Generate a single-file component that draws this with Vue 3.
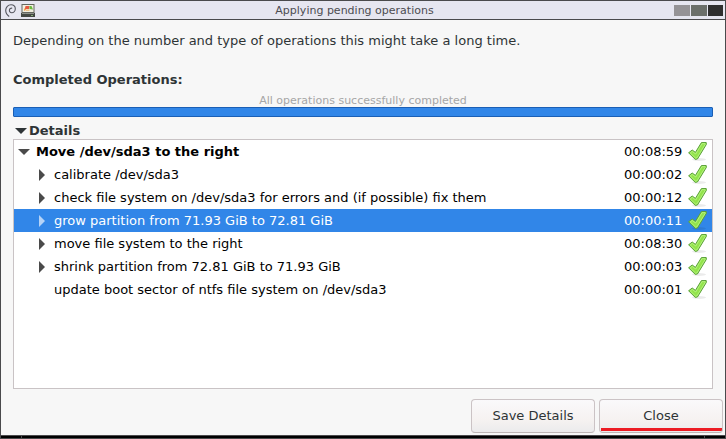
<script setup>
import { ref, computed } from 'vue'

const detailsOpen = ref(true)
const rootOpen = ref(true)
const selected = ref(3)

const operations = [
  { id: 0, label: 'Move /dev/sda3 to the right', time: '00:08:59', root: true, expandable: true },
  { id: 1, label: 'calibrate /dev/sda3', time: '00:00:02', expandable: true },
  { id: 2, label: 'check file system on /dev/sda3 for errors and (if possible) fix them', time: '00:00:12', expandable: true },
  { id: 3, label: 'grow partition from 71.93 GiB to 72.81 GiB', time: '00:00:11', expandable: true },
  { id: 4, label: 'move file system to the right', time: '00:08:30', expandable: true },
  { id: 5, label: 'shrink partition from 72.81 GiB to 71.93 GiB', time: '00:00:03', expandable: true },
  { id: 6, label: 'update boot sector of ntfs file system on /dev/sda3', time: '00:00:01', expandable: false }
]

const visible = computed(() => operations.filter((op) => op.root || rootOpen.value))

function toggle(op) {
  if (op.root) rootOpen.value = !rootOpen.value
}
</script>

<template>
  <div class="window">
    <header class="titlebar">
      <div class="title-icons">
        <svg class="swirl" viewBox="0 0 11 13" aria-hidden="true">
          <path d="M4.200 12.500C2 11 .7 9 .7 6.300C.7 3 3.200 .7 6 .7C8.600 .7 10.300 2.500 10.300 4.800C10.300 7.200 8.600 8.800 6.800 8.800C5.100 8.800 4.200 7.500 4.400 6.100C4.600 4.800 5.800 3.900 7.200 4.200" />
        </svg>
        <svg class="disk" viewBox="0 0 14 13" aria-hidden="true">
          <path d="M.5 0H13.500V9H.5Z" fill="#65675f" />
          <path d="M1.500 1H12.500V8H1.500Z" fill="#f1efe0" />
          <path d="M3 5L5 3V6L3 7Z" fill="#f6a355" />
          <path d="M4.500 2H8.500L8 5H4Z" fill="#e6583f" />
          <path d="M8.500 2H10.500L12 5.500L8.500 5Z" fill="#69bb3f" />
          <path d="M5 5.500H8.500V7H5Z" fill="#f1c78a" />
          <path d="M0 9H14V13H0Z" fill="#444843" />
          <path d="M1 9H13V10H1Z" fill="#8e928b" />
          <path d="M10 11H12V12H10Z" fill="#86ad77" />
        </svg>
      </div>
      <h1 class="title">Applying pending operations</h1>
      <div class="window-controls">
        <button class="control minimize" type="button" aria-label="Minimize"></button>
        <button class="control maximize" type="button" aria-label="Maximize"></button>
        <button class="control shut" type="button" aria-label="Close window"></button>
      </div>
    </header>

    <main class="content">
      <p class="intro">Depending on the number and type of operations this might take a long time.</p>
      <h2 class="heading">Completed Operations:</h2>
      <label class="status" for="overall">All operations successfully completed</label>
      <progress id="overall" class="progress" value="100" max="100"></progress>
      <button class="details-toggle" type="button" :aria-expanded="detailsOpen" @click="detailsOpen = !detailsOpen">
        <svg class="arrow" :class="{ open: detailsOpen }" viewBox="0 0 12 12" aria-hidden="true"><path d="M3 0L9 6L3 12Z" /></svg>
        <span>Details</span>
      </button>
      <div v-if="detailsOpen" class="list">
        <table class="operations" aria-label="Operation details">
          <tbody>
            <tr
              v-for="op in visible"
              :key="op.id"
              :class="{ root: op.root, selected: selected === op.id }"
              @click="selected = op.id"
            >
              <td class="name">
                <div class="name-inner">
                  <button v-if="op.expandable" class="expander" type="button" :aria-label="'Expand ' + op.label" @click.stop="toggle(op)">
                    <svg class="arrow" :class="{ open: op.root && rootOpen }" viewBox="0 0 12 12" aria-hidden="true"><path d="M3 0L9 6L3 12Z" /></svg>
                  </button>
                  <span v-else class="expander"></span>
                  <span>{{ op.label }}</span>
                </div>
              </td>
              <td class="time">{{ op.time }}</td>
              <td class="state">
                <svg class="check" viewBox="0 0 20 20" role="img" aria-label="Success">
                  <ellipse cx="11" cy="17.500" rx="7" ry="1.500" fill="#000" opacity=".08" />
                  <path d="M.6 10.800L4.200 8L7.400 10.400L13.400 .6L18.200 .5L18.400 2.300L9.500 16.900L7.300 17.400Z" fill="#92e44a" stroke="#5a9f3a" stroke-linejoin="round" />
                  <path d="M2.300 11L4.200 9.400L7.700 12L14 1.700L17.100 1.600L17.100 2.500L8.900 15.900L7.600 16.100Z" fill="none" stroke="#c3f595" stroke-width=".7" />
                </svg>
              </td>
            </tr>
          </tbody>
        </table>
      </div>
    </main>

    <footer class="actions">
      <button class="action" type="button">Save Details</button>
      <button class="action marked" type="button">Close</button>
    </footer>
    <div class="frame-grip"><span></span></div>
  </div>
</template>

<style>
body {
  margin: 0;
}
</style>

<style scoped>
.window {
  box-sizing: border-box;
  display: flex;
  flex-direction: column;
  min-height: 100vh;
  border: 1px solid #4a4a4c;
  background: #f7f7f7;
  color: #2e3436;
  font: 13px/15px "DejaVu Sans", sans-serif;
}
button {
  font: inherit;
  color: inherit;
  padding: 0;
  border: 0;
  background: none;
}
.titlebar {
  display: flex;
  align-items: center;
  height: 18px;
  padding: 0 2px 0 4px;
  border-bottom: 1px solid #4a4a4c;
  background: #e6e6f0;
}
.title-icons {
  display: flex;
  align-items: center;
  gap: 5px;
}
.swirl {
  width: 11px;
  height: 13px;
  fill: none;
  stroke: #55565e;
  stroke-width: 1.1;
}
.disk {
  width: 14px;
  height: 13px;
}
.title {
  flex: 1;
  margin: 0;
  font-size: 11px;
  font-weight: normal;
  text-align: center;
  color: #4c4c50;
}
.window-controls {
  display: flex;
  justify-content: flex-end;
  gap: 1px;
}
.control {
  width: 16px;
  height: 11px;
}
.minimize {
  background: #959396;
}
.maximize {
  background: #6b6f6a;
}
.shut {
  width: 15px;
  background: #2f2f2f;
}
.content {
  display: flex;
  flex: 1;
  flex-direction: column;
  padding: 13px 12px 0;
}
.intro {
  margin: 0 0 24px;
}
.heading {
  margin: 0 0 7px;
  font-size: 13px;
}
.status {
  font-size: 11px;
  line-height: 13px;
  text-align: center;
  color: #a6a6a6;
}
.progress {
  appearance: none;
  box-sizing: border-box;
  width: 100%;
  height: 10px;
  border: 1px solid #1b5fb5;
  border-radius: 1px;
  background: #fff;
}
.progress::-webkit-progress-bar {
  background: #fff;
}
.progress::-webkit-progress-value {
  background: #3186e8;
}
.details-toggle {
  display: flex;
  align-items: center;
  align-self: flex-start;
  gap: 2px;
  margin: 6px 0 1px;
  padding-left: 2px;
  font-weight: bold;
}
.arrow {
  display: block;
  width: 12px;
  height: 12px;
  fill: currentColor;
}
.arrow.open {
  transform: rotate(90deg);
}
.list {
  flex: 1;
  border: 1px solid #c9c3c5;
  background: #fff;
  color: #000;
}
.operations {
  width: 100%;
  border-collapse: collapse;
}
.operations tr {
  height: 23px;
}
.operations td {
  padding: 0;
}
.name-inner {
  display: flex;
  align-items: center;
  gap: 6px;
  padding-left: 22px;
}
.root .name-inner {
  padding-left: 4px;
}
.root .name {
  font-weight: bold;
}
.expander {
  width: 12px;
  color: #4a4a4a;
}
.time {
  width: 64px;
}
.state {
  width: 24px;
}
.check {
  display: block;
  width: 20px;
  height: 20px;
}
.selected {
  background: #3186e8;
  color: #fff;
}
.selected .expander {
  color: #b5d3f7;
}
.actions {
  display: flex;
  justify-content: flex-end;
  gap: 4px;
  padding: 10px 2px 2px;
}
.action {
  box-sizing: border-box;
  width: 124px;
  height: 34px;
  padding-bottom: 2px;
  border: 1px solid #cbc3c5;
  border-bottom-color: #bdb6b6;
  border-radius: 4px;
  background: linear-gradient(#faf9fb, #f6f2f1 60%, #ebebec);
}
.marked {
  background: linear-gradient(#ec1c24, #ec1c24) 1px 28px / 100% 3px no-repeat, linear-gradient(#faf9fb, #f6f2f1 60%, #ebebec);
}
.frame-grip {
  height: 2px;
  padding: 0 20px;
  border-top: 1px solid #4a4a4c;
  background: #000;
}
.frame-grip span {
  display: block;
  height: 2px;
  border: solid #4a4a4c;
  border-width: 0 1px;
}
</style>
